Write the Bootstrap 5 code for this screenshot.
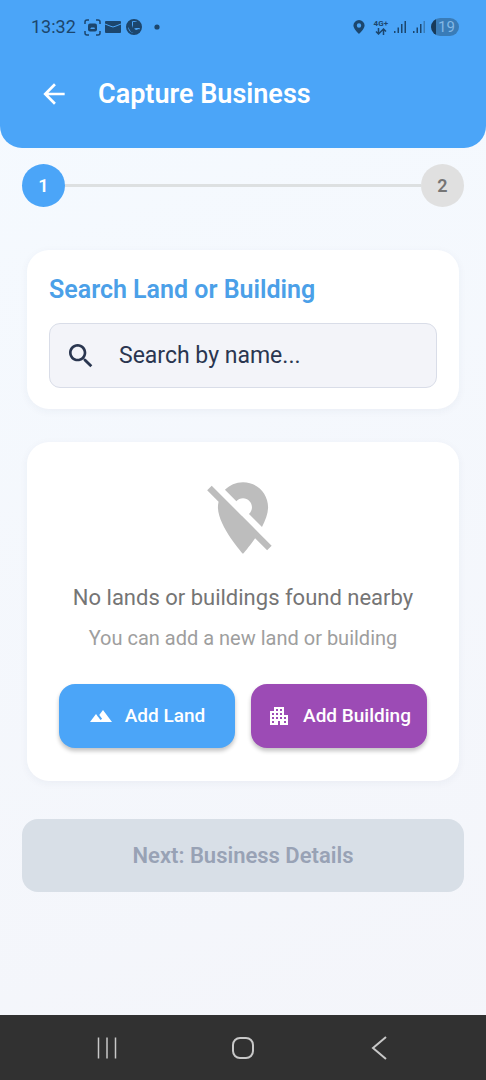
<!DOCTYPE html>
<html lang="en">
<head>
<meta charset="utf-8">
<meta name="viewport" content="width=device-width, initial-scale=1">
<title>Capture Business</title>
<link rel="stylesheet" href="https://cdn.jsdelivr.net/npm/bootstrap@5.3.0/dist/css/bootstrap.min.css">
<style>
  body { font-family: Roboto, "Liberation Sans", sans-serif; font-size: 20px; line-height: 24px;
    background: linear-gradient(160deg, #f5faff, #f4f5fa); }
  svg { display: block; flex: none; }
  .app-header { background: #4ba5f8; border-radius: 0 0 22px 22px; padding-bottom: 38px; }
  .status-bar { height: 54px; padding: 0 27px 0 31px; color: #1c466d; font-size: 18px; }
  .status-left { gap: 4px; }
  .status-right { gap: 5px; }
  .network-type { font-size: 8px; line-height: 8px; font-weight: 700; }
  .battery { width: 28px; height: 18px; border-radius: 9px; color: #83b8e6; font-size: 15px; line-height: 18px;
    background: linear-gradient(90deg, #183a59 5px, #397cb8 5px); padding-left: 3px; }
  .title-bar { height: 32px; margin-top: 24px; padding: 0 38px; gap: 28px; }
  .title-bar h1 { font-size: 27px; line-height: 32px; font-weight: 600; }
  .page-body { padding: 16px 22px 32px; }
  .step { width: 43px; height: 43px; border-radius: 50%; font-size: 18px; font-weight: 600; }
  .step-current { background: #4ba5f8; color: #fff; }
  .step-next { background: #e0e0e0; color: #757575; }
  .step-line { height: 3px; background: #dde0e1; }
  .panel { background: #fff; border-radius: 22px; margin: 0 5px; box-shadow: 0 2px 8px rgba(40, 60, 100, .05); }
  .search-panel { margin-top: 43px; padding: 22px 22px 21px; }
  .search-panel h2 { color: #4ba0e8; font-size: 25px; line-height: 36px; font-weight: 600; margin-bottom: 15px; }
  .search-box { height: 65px; border: 1px solid #d9dde8; border-radius: 11px; background: #f3f4f9; color: #2a3650;
    padding: 0 15px; gap: 22px; }
  .search-box input, .search-box input:focus { background: none; color: inherit; font-size: 23px; line-height: 32px; box-shadow: none; }
  .search-box input::placeholder { color: #2a3650; opacity: 1; }
  .result-panel { margin-top: 33px; padding: 33px 32px; }
  .empty-title { color: #757575; font-size: 22px; line-height: 32px; margin: 21px 0 10px; }
  .empty-hint { color: #9e9e9e; font-size: 20px; line-height: 28px; margin-bottom: 32px; }
  .action { height: 64px; border: 0; border-radius: 16px; color: #fff; font-size: 19px; font-weight: 500;
    gap: 12px; padding: 0; box-shadow: 0 3px 4px rgba(0, 0, 0, .24); }
  .action-land, .action-land:hover { background: #4ba5f8; color: #fff; }
  .action-building, .action-building:hover { background: #9c4bb5; color: #fff; }
  .next-button, .next-button:disabled { height: 73px; margin-top: 38px; border: 0; border-radius: 16px; background: #d8dfe7;
    color: #98a2b5; font-size: 22px; font-weight: 600; opacity: 1; }
  .system-nav { height: 65px; background: #313131; color: #c8c8c8; padding: 0 39px; }
  .system-nav .btn { color: inherit; border: 0; }
</style>
</head>
<body class="d-flex flex-column min-vh-100">
<header class="app-header">
  <div class="status-bar d-flex align-items-center justify-content-between">
    <div class="status-left d-flex align-items-center">
      <span class="me-1">13:32</span>
      <svg width="17" height="17" viewBox="0 0 17 17" fill="none" stroke="currentColor" stroke-width="1.500"><path d="M1 5V3q0-2 2-2h2M12 1h2q2 0 2 2v2M16 12v2q0 2-2 2h-2M5 16H3q-2 0-2-2v-2"/><rect x="4" y="4.500" width="9" height="8" rx="2" fill="currentColor" stroke="none"/><path d="M6 10l2-2 1 1 1-1 1 2z" fill="#4ba5f8" stroke="none"/></svg>
      <svg width="16" height="12" viewBox="0 0 16 12"><rect width="16" height="12" rx="1" fill="currentColor"/><path d="M0 3l5 2q3 2 6 0l5-2" fill="none" stroke="#4ba5f8"/></svg>
      <svg width="18" height="18" viewBox="0 0 18 18"><circle cx="9" cy="9" r="7" fill="none" stroke="currentColor" stroke-width="2"/><path d="M3 4l4-1v4l1 3 3 2 3-1 1 3-4 2-5-2-3-5zM8 4h7v6h-4l-3 1z" fill="currentColor"/></svg>
      <svg class="ms-1" width="12" height="6" viewBox="0 0 12 6"><circle cx="6" cy="3" r="2.600" fill="currentColor"/></svg>
    </div>
    <div class="status-right d-flex align-items-center">
      <svg class="me-1" width="12" height="14" viewBox="0 0 12 14"><path fill="currentColor" fill-rule="evenodd" d="M6 0a5.600 5.600 0 0 0-5.600 5.600C.4 9 6 14 6 14s5.600-5 5.600-8.400A5.600 5.600 0 0 0 6 0zm0 3.300a2.200 2.200 0 1 1 0 4.400 2.200 2.200 0 0 1 0-4.400z"/></svg>
      <div class="d-flex flex-column align-items-center network-type">4G+
        <svg width="12" height="7" viewBox="0 0 12 7" fill="none" stroke="currentColor" stroke-width="1.500"><path d="M3.500 0v6M1 3.500l2.500 2.500L6 3.500M8.500 7V1M6 3.500L8.500 1 11 3.500"/></svg>
      </div>
      <svg width="14" height="14" viewBox="0 0 14 14"><path fill="currentColor" d="M1 11h1.500v2H1zM4.500 7.500H6V13H4.500zM8 4h1.500v9H8zM11.500 1H13v12h-1.500z"/></svg>
      <svg width="14" height="14" viewBox="0 0 14 14"><path fill="currentColor" d="M1 11h1.500v2H1zM4.500 7.500H6V13H4.500zM8 4h1.500v9H8z"/><path fill="#397cb8" d="M11.500 1H13v12h-1.500z"/></svg>
      <span class="battery text-center">19</span>
    </div>
  </div>
  <div class="title-bar d-flex align-items-center">
    <button type="button" class="btn p-0 border-0 text-white" aria-label="Back">
      <svg width="32" height="32" viewBox="0 0 24 24" fill="currentColor"><path d="M20 11H7.830l5.590-5.590L12 4l-8 8 8 8 1.410-1.410L7.830 13H20v-2z"/></svg>
    </button>
    <h1 class="m-0 text-white">Capture Business</h1>
  </div>
</header>

<main class="page-body flex-grow-1">
  <div class="d-flex align-items-center">
    <div class="step step-current d-flex align-items-center justify-content-center">1</div>
    <div class="step-line flex-grow-1"></div>
    <div class="step step-next d-flex align-items-center justify-content-center">2</div>
  </div>

  <section class="panel search-panel">
    <h2>Search Land or Building</h2>
    <div class="search-box d-flex align-items-center">
      <label for="search"><svg width="32" height="32" viewBox="0 0 24 24" fill="currentColor" role="img" aria-label="Search"><path d="M15.500 14h-.79l-.28-.27C15.410 12.590 16 11.110 16 9.500 16 5.910 13.090 3 9.500 3S3 5.910 3 9.500 5.910 16 9.500 16c1.610 0 3.090-.59 4.230-1.570l.27.28v.79l5 4.990L20.490 19l-4.990-5zm-6 0C7.010 14 5 11.990 5 9.500S7.010 5 9.500 5 14 7.010 14 9.500 11.990 14 9.500 14z"/></svg></label>
      <input id="search" type="text" class="form-control border-0 p-0" placeholder="Search by name...">
    </div>
  </section>

  <section class="panel result-panel text-center">
    <svg class="mx-auto" width="86" height="86" viewBox="0 0 24 24" fill="#bdbdbd"><path d="M12 6.500c1.380 0 2.500 1.120 2.500 2.500 0 .74-.33 1.390-.83 1.850l3.630 3.630c.98-1.860 1.700-3.800 1.700-5.480 0-3.870-3.130-7-7-7-1.980 0-3.760.83-5.040 2.150l3.190 3.190c.46-.52 1.110-.84 1.850-.84zm4.370 9.600l-4.630-4.630-.11-.11L3.270 3 2 4.270l3.180 3.180C5.070 7.950 5 8.470 5 9c0 5.250 7 13 7 13s1.670-1.850 3.380-4.350L18.730 21 20 19.730l-3.630-3.630z"/></svg>
    <p class="empty-title">No lands or buildings found nearby</p>
    <p class="empty-hint">You can add a new land or building</p>
    <div class="d-flex gap-3">
      <button type="button" class="btn action action-land flex-fill w-50 d-flex align-items-center justify-content-center">
        <svg width="24" height="24" viewBox="0 0 24 24" fill="currentColor"><path d="M14 6l-3.750 5 2.850 3.800-1.600 1.200C9.810 13.750 7 10 7 10l-6 8h22L14 6z"/></svg>Add Land
      </button>
      <button type="button" class="btn action action-building flex-fill w-50 d-flex align-items-center justify-content-center">
        <svg width="24" height="24" viewBox="0 0 24 24" fill="currentColor"><path d="M17 11V3H7v4H3v14h8v-4h2v4h8V11h-4zM7 19H5v-2h2v2zm0-4H5v-2h2v2zm0-4H5V9h2v2zm4 4H9v-2h2v2zm0-4H9V9h2v2zm0-4H9V5h2v2zm4 8h-2v-2h2v2zm0-4h-2V9h2v2zm0-4h-2V5h2v2zm4 12h-2v-2h2v2zm0-4h-2v-2h2v2z"/></svg>Add Building
      </button>
    </div>
  </section>

  <button type="button" class="btn next-button w-100" disabled>Next: Business Details</button>
</main>

<nav class="system-nav d-flex align-items-center" aria-label="System">
  <button type="button" class="btn p-0 flex-fill" aria-label="Recent apps"><svg class="mx-auto" width="24" height="24" viewBox="0 0 24 24" fill="none" stroke="currentColor" stroke-width="1.500"><path d="M3.500 1.500v21M12 1.500v21M20.500 1.500v21"/></svg></button>
  <button type="button" class="btn p-0 flex-fill" aria-label="Home"><svg class="mx-auto" width="24" height="24" viewBox="0 0 24 24" fill="none" stroke="currentColor" stroke-width="2"><rect x="2" y="2" width="20" height="20" rx="7"/></svg></button>
  <button type="button" class="btn p-0 flex-fill" aria-label="Back"><svg class="mx-auto" width="24" height="24" viewBox="0 0 24 24" fill="none" stroke="currentColor" stroke-width="2"><path d="M19 1L6 12l13 11"/></svg></button>
</nav>
<script src="https://cdn.jsdelivr.net/npm/bootstrap@5.3.0/dist/js/bootstrap.bundle.min.js"></script>
</body>
</html>
